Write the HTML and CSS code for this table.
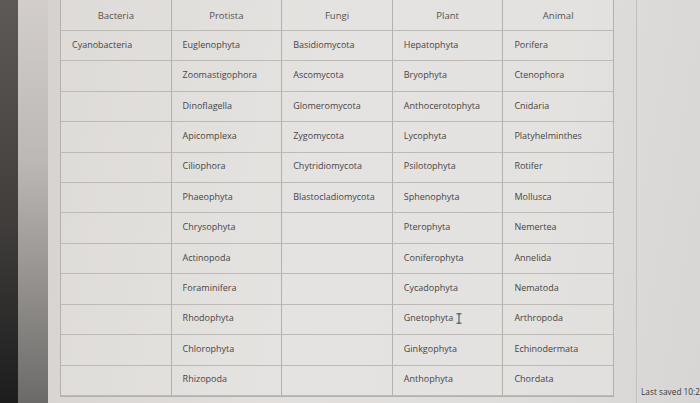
FILE: index.html
```html
<!DOCTYPE html>
<html>
<head>
<meta charset="utf-8">
<link rel="stylesheet" href="styles.css">
</head>
<body>
<div class="screen">
  <div class="bezel"></div>
  <div class="edge"></div>
  <div class="page">
    <div class="table">
      <div class="cell head">Bacteria</div>
      <div class="cell head">Protista</div>
      <div class="cell head">Fungi</div>
      <div class="cell head">Plant</div>
      <div class="cell head">Animal</div>

      <div class="cell">Cyanobacteria</div>
      <div class="cell">Euglenophyta</div>
      <div class="cell">Basidiomycota</div>
      <div class="cell">Hepatophyta</div>
      <div class="cell">Porifera</div>

      <div class="cell"></div>
      <div class="cell">Zoomastigophora</div>
      <div class="cell">Ascomycota</div>
      <div class="cell">Bryophyta</div>
      <div class="cell">Ctenophora</div>

      <div class="cell"></div>
      <div class="cell">Dinoflagella</div>
      <div class="cell">Glomeromycota</div>
      <div class="cell">Anthocerotophyta</div>
      <div class="cell">Cnidaria</div>

      <div class="cell"></div>
      <div class="cell">Apicomplexa</div>
      <div class="cell">Zygomycota</div>
      <div class="cell">Lycophyta</div>
      <div class="cell">Platyhelminthes</div>

      <div class="cell"></div>
      <div class="cell">Ciliophora</div>
      <div class="cell">Chytridiomycota</div>
      <div class="cell">Psilotophyta</div>
      <div class="cell">Rotifer</div>

      <div class="cell"></div>
      <div class="cell">Phaeophyta</div>
      <div class="cell">Blastocladiomycota</div>
      <div class="cell">Sphenophyta</div>
      <div class="cell">Mollusca</div>

      <div class="cell"></div>
      <div class="cell">Chrysophyta</div>
      <div class="cell"></div>
      <div class="cell">Pterophyta</div>
      <div class="cell">Nemertea</div>

      <div class="cell"></div>
      <div class="cell">Actinopoda</div>
      <div class="cell"></div>
      <div class="cell">Coniferophyta</div>
      <div class="cell">Annelida</div>

      <div class="cell"></div>
      <div class="cell">Foraminifera</div>
      <div class="cell"></div>
      <div class="cell">Cycadophyta</div>
      <div class="cell">Nematoda</div>

      <div class="cell"></div>
      <div class="cell">Rhodophyta</div>
      <div class="cell"></div>
      <div class="cell">Gnetophyta<svg class="ibeam" width="6" height="11" viewBox="0 0 6 11"><path d="M0.5 0.8h5M0.5 10.2h5M3 0.8v9.4" stroke="#3a3a3a" stroke-width="1" fill="none"/></svg></div>
      <div class="cell">Arthropoda</div>

      <div class="cell"></div>
      <div class="cell">Chlorophyta</div>
      <div class="cell"></div>
      <div class="cell">Ginkgophyta</div>
      <div class="cell">Echinodermata</div>

      <div class="cell"></div>
      <div class="cell">Rhizopoda</div>
      <div class="cell"></div>
      <div class="cell">Anthophyta</div>
      <div class="cell">Chordata</div>
    </div>
    <div class="side">
      <div class="saved">Last saved 10:2</div>
    </div>
  </div>
</div>
</body>
</html>
```

FILE: styles.css
```css
html, body {
  margin: 0;
  padding: 0;
  width: 700px;
  height: 403px;
  overflow: hidden;
  background: #d9d6d4;
  font-family: "Open Sans", "Noto Sans", sans-serif;
}

.screen {
  display: flex;
  width: 700px;
  height: 403px;
}

.bezel {
  width: 18px;
  flex: none;
  background: linear-gradient(to bottom, #5e5a57 0%, #403d3b 55%, #1d1d1e 100%);
}

.edge {
  width: 30px;
  flex: none;
  background: linear-gradient(to bottom, #d3cecb 0%, #bcb8b5 40%, #6c6a68 100%);
}

.page {
  flex: 1;
  display: flex;
  background: linear-gradient(100deg, #d6d2cf 0%, #e2dfdd 40%, #e0dedc 70%, #d8d6d5 100%);
  padding-left: 12px;
}

.table {
  flex: none;
  width: 554px;
  height: 397px;
  display: grid;
  grid-template-columns: repeat(5, 1fr);
  grid-template-rows: 31px repeat(12, 1fr);
  border-left: 1px solid #b4b0ad;
  border-bottom: 1px solid #b4b0ad;
  box-sizing: border-box;
}

.cell {
  display: flex;
  align-items: center;
  padding-left: 11px;
  padding-bottom: 3px;
  font-size: 9px;
  color: #474544;
  border-right: 1px solid #b4b0ad;
  border-bottom: 1px solid #bdb9b6;
  white-space: nowrap;
  background: rgba(236, 234, 232, 0.35);
}

.cell.head {
  justify-content: center;
  padding-left: 0;
  padding-bottom: 0;
  color: #555250;
  font-size: 9.5px;
}

.ibeam {
  margin-left: 3px;
  margin-top: 2px;
}

.side {
  flex: 1;
  display: flex;
  align-items: flex-end;
  position: relative;
}

.side::before {
  content: "";
  position: absolute;
  left: 22px;
  top: 0;
  bottom: 0;
  border-left: 1px solid #c3bfbc;
}

.saved {
  font-size: 8.3px;
  color: #3a3938;
  white-space: nowrap;
  padding-left: 27px;
  padding-bottom: 6px;
}
```
